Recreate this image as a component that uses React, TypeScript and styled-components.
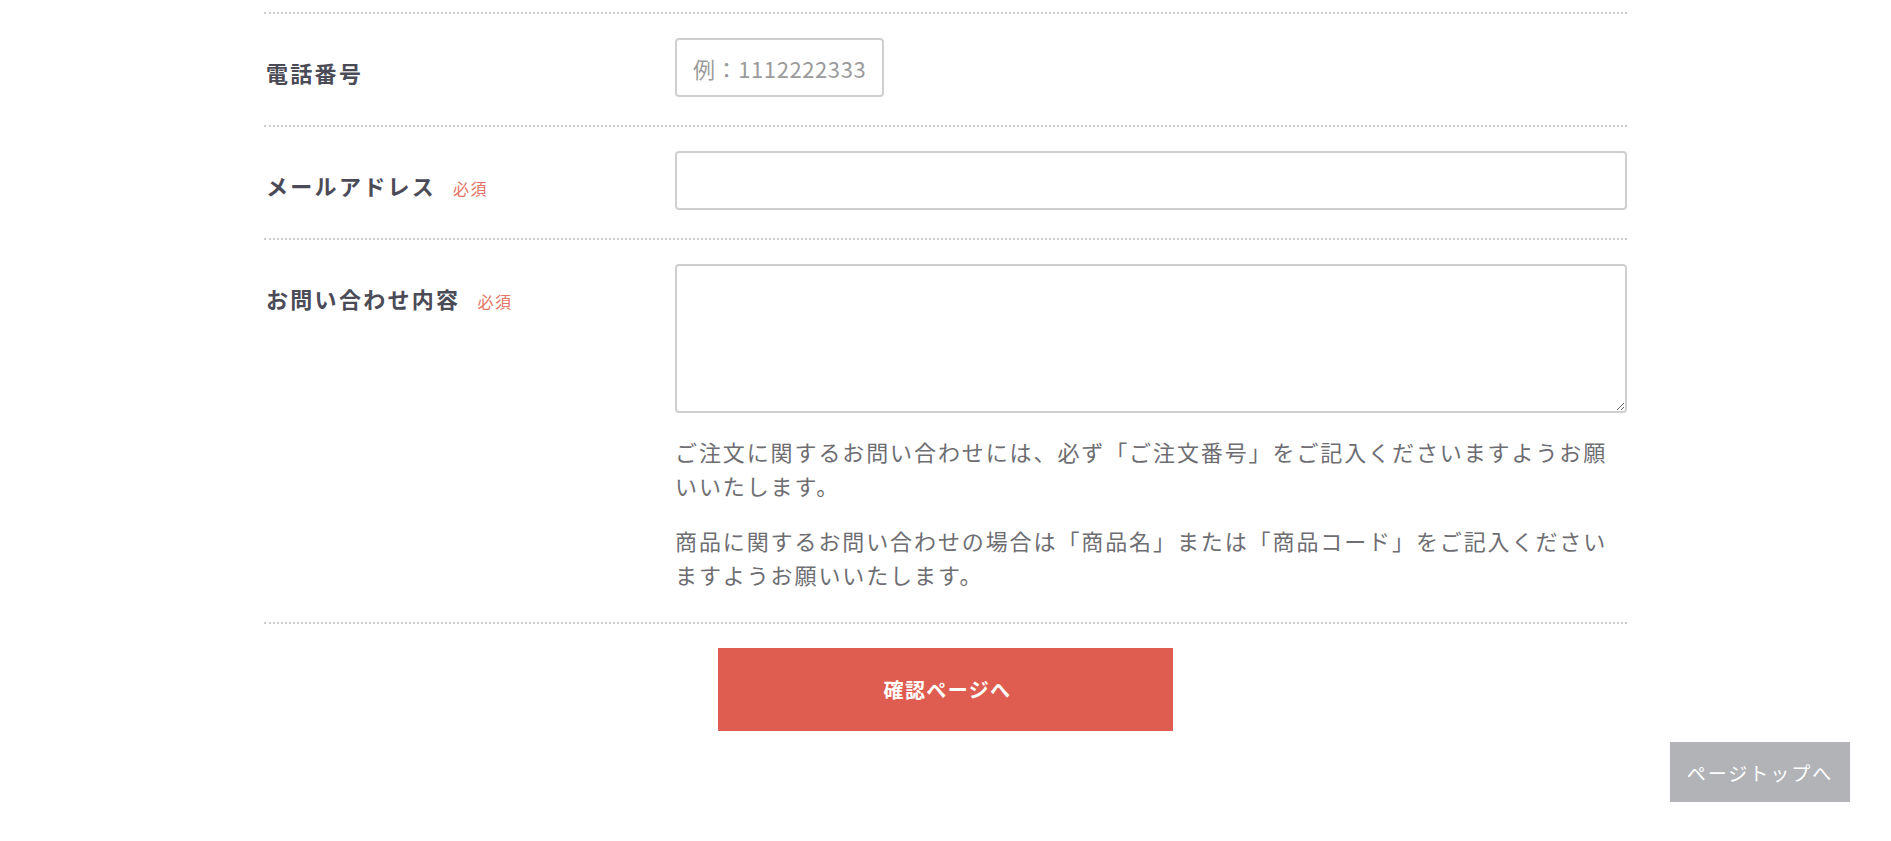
import React from "react";
import styled, { createGlobalStyle } from "styled-components";

const GlobalStyle = createGlobalStyle`
  html, body {
    margin: 0;
    padding: 0;
    background: #ffffff;
  }
  body {
    font-family: "Noto Sans CJK JP", "Noto Sans", sans-serif;
    color: #4b4b57;
  }
  * { box-sizing: border-box; }
`;

const Page = styled.div`
  padding-top: 12px;
`;

const Form = styled.form`
  width: 1363px;
  margin: 0 auto;
`;

const Row = styled.div`
  display: grid;
  grid-template-columns: 411px 1fr;
  border-top: 2px dotted #cbcbcb;
  padding: 24px 0 28px;
`;

const Label = styled.div`
  display: flex;
  align-items: baseline;
  margin-top: 17px;
  line-height: 34px;
  padding-left: 2px;
`;

const LabelText = styled.span`
  font-size: 22px;
  font-weight: 700;
  letter-spacing: 2.3px;
  color: #4b4b57;
`;

const Required = styled.span`
  margin-left: 17px;
  font-size: 16px;
  letter-spacing: 1.5px;
  color: #e27565;
`;

const Field = styled.div`
  display: flex;
  flex-direction: column;
`;

const TextInput = styled.input<{ $w?: number }>`
  width: ${(p) => (p.$w ? `${p.$w}px` : "100%")};
  height: 59px;
  border: 2px solid #cfcfcf;
  border-radius: 4px;
  padding: 0 16px;
  font-family: "Noto Sans CJK JP", "Noto Sans", sans-serif;
  font-size: 22px;
  letter-spacing: 0.6px;
  color: #4b4b57;
  outline: none;
  &::placeholder {
    color: #9b9b9b;
  }
`;

const TextArea = styled.textarea`
  width: 100%;
  height: 149px;
  border: 2px solid #cfcfcf;
  border-radius: 4px;
  padding: 12px 16px;
  font-family: "Noto Sans CJK JP", "Noto Sans", sans-serif;
  font-size: 20px;
  outline: none;
  display: block;
`;

const Notes = styled.div`
  margin-top: 21px;
  margin-bottom: 3px;
  display: flex;
  flex-direction: column;
  gap: 21px;
`;

const Note = styled.p`
  margin: 0;
  font-size: 22px;
  line-height: 34px;
  letter-spacing: 1.9px;
  color: #6d6d72;
  font-weight: 400;
`;

const Actions = styled.div`
  display: flex;
  justify-content: center;
  border-top: 2px dotted #cbcbcb;
  padding-top: 24px;
  padding-bottom: 40px;
`;

const SubmitButton = styled.button`
  width: 455px;
  height: 83px;
  border: none;
  padding: 0 0 0 4px;
  background: #df5d50;
  color: #ffffff;
  font-family: "Noto Sans CJK JP", "Noto Sans", sans-serif;
  font-size: 20px;
  font-weight: 700;
  letter-spacing: 1.4px;
  cursor: pointer;
`;

const PageTop = styled.a`
  position: fixed;
  right: 41px;
  bottom: 39px;
  width: 180px;
  height: 60px;
  display: flex;
  align-items: center;
  justify-content: center;
  background: #b1b3b7;
  color: #ffffff;
  font-size: 19px;
  letter-spacing: 2px;
  text-decoration: none;
  font-weight: 400;
`;

export default function App() {
  return (
    <Page>
      <GlobalStyle />
      <Form onSubmit={(e) => e.preventDefault()}>
        <Row>
          <Label>
            <LabelText>電話番号</LabelText>
          </Label>
          <Field>
            <TextInput type="tel" placeholder="例：1112222333" $w={209} />
          </Field>
        </Row>
        <Row>
          <Label>
            <LabelText>メールアドレス</LabelText>
            <Required>必須</Required>
          </Label>
          <Field>
            <TextInput type="email" />
          </Field>
        </Row>
        <Row>
          <Label>
            <LabelText>お問い合わせ内容</LabelText>
            <Required>必須</Required>
          </Label>
          <Field>
            <TextArea />
            <Notes>
              <Note>
                ご注文に関するお問い合わせには、必ず「ご注文番号」をご記入くださいますようお願いいたします。
              </Note>
              <Note>
                商品に関するお問い合わせの場合は「商品名」または「商品コード」をご記入くださいますようお願いいたします。
              </Note>
            </Notes>
          </Field>
        </Row>
        <Actions>
          <SubmitButton type="submit">確認ページへ</SubmitButton>
        </Actions>
      </Form>
      <PageTop href="#">ページトップへ</PageTop>
    </Page>
  );
}
